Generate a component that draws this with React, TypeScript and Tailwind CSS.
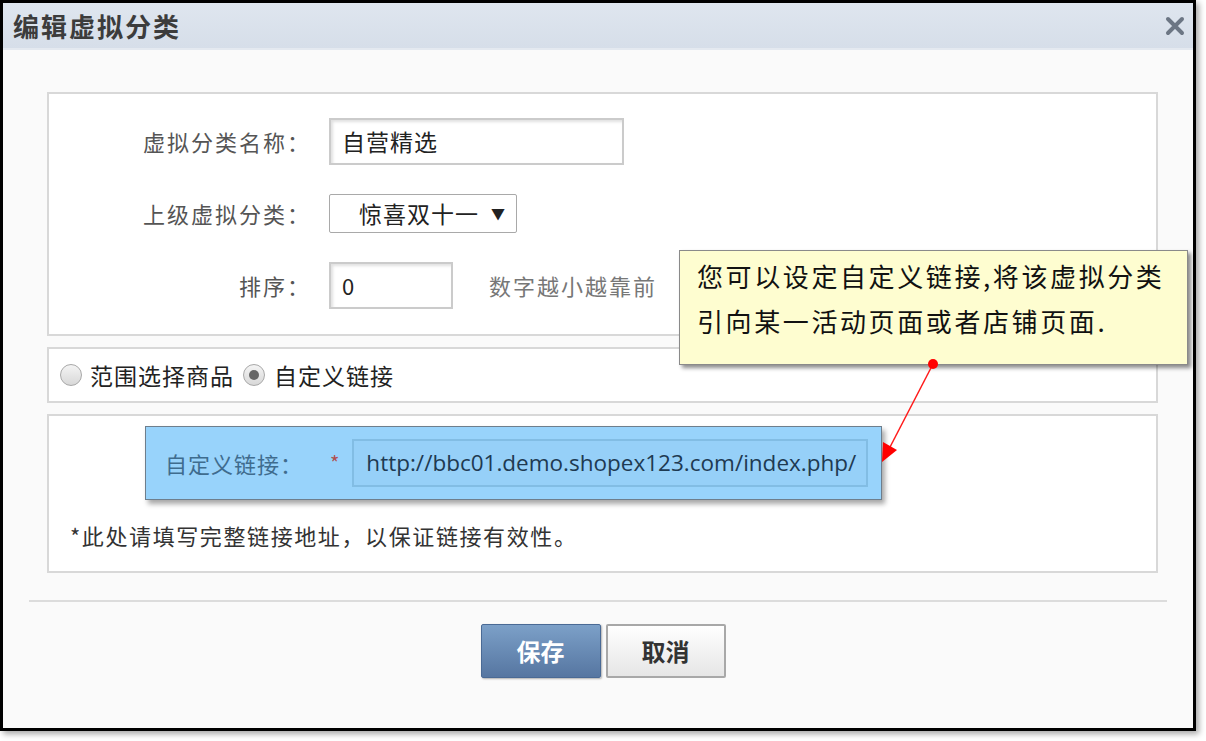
import React from 'react'

const cjk = { fontFamily: '"Noto Sans CJK SC", "Noto Sans", sans-serif' }

function Radio({ checked }: { checked?: boolean }) {
  return (
    <span className="w-[22px] h-[22px] rounded-full border border-[#a8a8a8] bg-gradient-to-b from-[#f4f4f4] to-[#d8d8d8] flex items-center justify-center shrink-0">
      {checked && <span className="w-[10px] h-[10px] rounded-full bg-[#666]" />}
    </span>
  )
}

export default function App() {
  return (
    <div className="w-[1206px] h-[741px] bg-white relative overflow-hidden" style={cjk}>
      <div className="w-[1196px] h-[731px] border-[3px] border-black bg-[#fafafa] shadow-[3px_3px_6px_rgba(0,0,0,0.35)] flex flex-col relative">
        {/* header */}
        <div className="h-[47px] bg-gradient-to-b from-[#dfe6ef] to-[#d6dee9] border-b-[2px] border-[#e4e9f0] flex items-center justify-between pl-[10px] pr-[8px] shrink-0">
          <h1 className="text-[26px] font-bold text-[#3c3c3c] tracking-[2px]">编辑虚拟分类</h1>
          <svg width="20" height="20" viewBox="0 0 20 20">
            <path d="M3 3 L17 17 M17 3 L3 17" stroke="#6c7684" strokeWidth="4" strokeLinecap="round" />
          </svg>
        </div>

        <div className="pt-[42px] pl-[44px] flex flex-col gap-[11px]">
          {/* panel 1 */}
          <div className="w-[1111px] h-[244px] bg-white border-2 border-[#d8d8d8] pt-[24px] flex flex-col gap-[25px]">
            <div className="flex items-center h-[47px]">
              <label className="w-[262px] text-right text-[22px] tracking-[2px] text-[#555]">虚拟分类名称：</label>
              <div className="ml-[18px] w-[295px] h-[47px] border-2 border-[#cbcbcb] shadow-[inset_2px_2px_3px_rgba(0,0,0,0.12)] flex items-center pl-[11px] text-[23px] tracking-[1px] text-[#222]">自营精选</div>
            </div>
            <div className="flex items-center h-[47px]">
              <label className="w-[262px] text-right text-[22px] tracking-[2px] text-[#555]">上级虚拟分类：</label>
              <div className="ml-[18px] w-[188px] h-[39px] border border-[#a9a9a9] rounded-[2px] bg-white flex items-center pl-[29px] text-[23px] tracking-[1px] text-[#222]">
                惊喜双十一<span className="ml-[12px] text-[14px]">▼</span>
              </div>
            </div>
            <div className="flex items-center h-[47px]">
              <label className="w-[262px] text-right text-[22px] tracking-[2px] text-[#555]">排序：</label>
              <div className="ml-[18px] w-[124px] h-[47px] border-2 border-[#cbcbcb] shadow-[inset_2px_2px_3px_rgba(0,0,0,0.12)] flex items-center pl-[11px] text-[22px] text-[#222]">0</div>
              <span className="ml-[36px] text-[22px] tracking-[2px] text-[#777]">数字越小越靠前</span>
            </div>
          </div>

          {/* panel 2 */}
          <div className="w-[1111px] h-[56px] bg-white border-2 border-[#d8d8d8] flex items-center pl-[11px] text-[23px] tracking-[1px] text-[#222]">
            <Radio />
            <span className="ml-[8px]">范围选择商品</span>
            <span className="ml-[9px]"><Radio checked /></span>
            <span className="ml-[9px]">自定义链接</span>
          </div>

          {/* panel 3 */}
          <div className="w-[1111px] h-[159px] bg-white border-2 border-[#d8d8d8] pt-[10px] flex flex-col">
            <div className="ml-[96px] w-[737px] h-[74px] bg-[#98d3fb] border border-[#6e7e8c] shadow-[3px_4px_5px_rgba(0,0,0,0.35)] flex items-center pl-[19px]">
              <span className="text-[22px] tracking-[1px] text-[#3f6c8e]">自定义链接：</span>
              <span className="ml-[27px] text-[20px] text-[#b0504f]">*</span>
              <div className="ml-[13px] w-[516px] h-[48px] bg-[#96d0f8] border-2 border-[#82bde4] flex items-center pl-[12px] overflow-hidden whitespace-nowrap text-[22.5px] text-[#1e3a52]" style={{ fontFamily: '"Open Sans", sans-serif' }}>
                http://bbc01.demo.shopex123.com/index.php/
              </div>
            </div>
            <p className="mt-[19px] ml-[21px] text-[22px] tracking-[1.6px] text-[#333]">*此处请填写完整链接地址，以保证链接有效性。</p>
          </div>
        </div>

        {/* footer */}
        <div className="mt-[27px] mx-[26px] border-t-2 border-[#dcdcdc]" />
        <div className="mt-[22px] flex justify-center gap-[5px] pl-[10px]">
          <button className="w-[120px] h-[54px] rounded-[2px] border border-[#4a6a95] bg-gradient-to-b from-[#7ca0c8] to-[#5676a1] text-white text-[24px] font-bold shadow-[1px_1px_2px_rgba(0,0,0,0.3)]">保存</button>
          <button className="w-[120px] h-[54px] rounded-[2px] border-2 border-[#a8a8a8] bg-gradient-to-b from-white to-[#e6e6e6] text-[#333] text-[24px] font-bold">取消</button>
        </div>

        {/* tooltip */}
        <div className="absolute left-[676px] top-[247px] w-[509px] h-[115px] bg-[#fefdd0] border border-[#8a8a8a] shadow-[3px_3px_4px_rgba(0,0,0,0.45)] pl-[17px] pt-[2px] text-[26px] tracking-[2.6px] text-[#111] leading-[45px] whitespace-nowrap">
          <p>您可以设定自定义链接,将该虚拟分类</p>
          <p>引向某一活动页面或者店铺页面.</p>
        </div>

        {/* arrow */}
        <svg className="absolute left-0 top-0 pointer-events-none" width="1196" height="731" viewBox="3 3 1196 731">
          <line x1="933" y1="364" x2="889" y2="449" stroke="#ff1a1a" strokeWidth="1.5" />
          <polygon points="882,462 883,442 897,450" fill="#ff0000" />
          <circle cx="933" cy="364" r="5" fill="#ff0000" />
        </svg>
      </div>
    </div>
  )
}
